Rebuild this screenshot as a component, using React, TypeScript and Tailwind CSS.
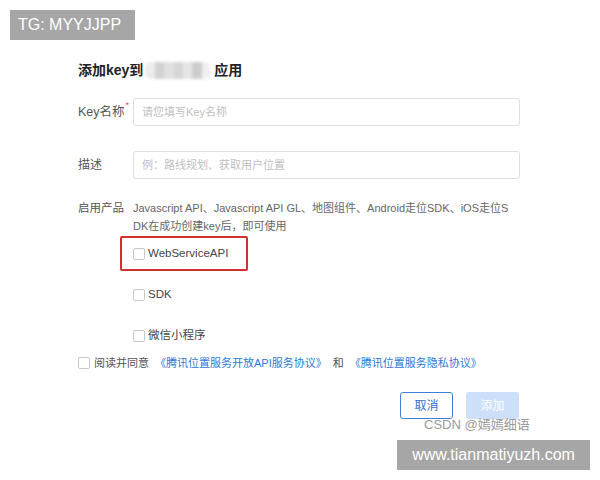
import React from "react";

const Box = () => (
  <span className="inline-block w-[12px] h-[12px] border border-[#c8c8c8] rounded-[2px] bg-white shrink-0" />
);

export default function App() {
  return (
    <div className="relative w-[600px] h-[480px] bg-white overflow-hidden font-['Liberation_Sans','Noto_Sans_CJK_SC',sans-serif] text-[#333]">
      <div className="pl-[78px] pt-[61px] flex flex-col">
        {/* title */}
        <div className="flex items-center h-[18px] text-[14px] font-bold text-[#222]">
          <span>添加key到</span>
          <span className="ml-[2px] mr-[3px] w-[66px] h-[17px] flex rounded-[6px] overflow-hidden blur-[1.5px]">
            <span className="flex-1 bg-[#ececec]" />
            <span className="flex-1 bg-[#d2d2d2]" />
            <span className="flex-1 bg-[#e0e0e0]" />
            <span className="flex-1 bg-[#d6d6d6]" />
            <span className="flex-1 bg-[#e6e6e6]" />
            <span className="flex-1 bg-[#cdcdcd]" />
            <span className="flex-1 bg-[#f0f0f0]" />
          </span>
          <span>应用</span>
        </div>

        {/* key name */}
        <div className="mt-[19px] flex items-center h-[28px] text-[12.5px]">
          <div className="w-[55px] flex items-start text-[#555]">
            <span>Key名称</span>
            <span className="text-[#e5484d] text-[9px] leading-none ml-[1px] -mt-[2px]">*</span>
          </div>
          <div className="w-[387px] h-[28px] border border-[#dedede] rounded-[3px] flex items-center px-[8px] text-[11px] text-[#c0c0c0]">
            请您填写Key名称
          </div>
        </div>

        {/* desc */}
        <div className="mt-[25px] flex items-center h-[28px] text-[12px]">
          <div className="w-[55px] text-[#555]">描述</div>
          <div className="w-[387px] h-[28px] border border-[#dedede] rounded-[3px] flex items-center px-[8px] text-[11px] text-[#c0c0c0]">
            例：路线规划、获取用户位置
          </div>
        </div>

        {/* products */}
        <div className="mt-[20px] flex items-start text-[11px]">
          <div className="w-[55px] text-[#555] text-[11.5px] leading-[18px]">启用产品</div>
          <div className="w-[387px] flex flex-col">
            <div className="text-[#666] leading-[18px] break-all pr-[7px]">
              Javascript API、Javascript API GL、地图组件、Android走位SDK、iOS走位SDK在成功创建key后，即可使用
            </div>
            <div className="mt-[1px] -ml-[13px] w-[128px] h-[35px] border-2 border-[#d0312d] rounded-[2px] flex items-center pl-[11px] gap-[3px] text-[#444] text-[11.5px]">
              <Box />
              <span>WebServiceAPI</span>
            </div>
            <div className="mt-[17px] flex items-center gap-[3px] h-[14px] text-[#444] text-[11.5px]">
              <Box />
              <span>SDK</span>
            </div>
            <div className="mt-[27px] flex items-center gap-[3px] h-[14px] text-[#444]">
              <Box />
              <span className="text-[11.5px]">微信小程序</span>
            </div>
          </div>
        </div>

        {/* agreement */}
        <div className="mt-[13px] flex items-center gap-[4px] h-[14px] text-[11px] text-[#555]">
          <Box />
          <span>阅读并同意</span>
          <span className="ml-[2px] text-[#2a7ad6]">《腾讯位置服务开放API服务协议》</span>
          <span className="mx-[2px]">和</span>
          <span className="text-[#2a7ad6]">《腾讯位置服务隐私协议》</span>
        </div>

        {/* buttons */}
        <div className="mt-[22px] w-[441px] flex justify-end gap-[13px] text-[12px]">
          <div className="w-[53px] h-[27px] border border-[#3f7ed8] rounded-[3px] flex items-center justify-center text-[#2f6fcf]">
            取消
          </div>
          <div className="w-[53px] h-[27px] bg-[#cddff9] rounded-[3px] flex items-center justify-center text-white">
            添加
          </div>
        </div>
      </div>

      {/* overlays */}
      <div className="absolute left-[10px] top-[10px] w-[125px] h-[30px] bg-[#a6a6a6] text-white text-[16px] flex items-center pl-[8px]">
        TG: MYYJJPP
      </div>
      <div className="absolute left-[424px] top-[417px] text-[13px] text-[#9a9a9a] leading-[16px]">
        CSDN @嫣嫣细语
      </div>
      <div className="absolute left-[397px] top-[440px] w-[193px] h-[30px] bg-[#a6a6a6] text-white text-[16px] flex items-center justify-center">
        www.tianmatiyuzh.com
      </div>
    </div>
  );
}
